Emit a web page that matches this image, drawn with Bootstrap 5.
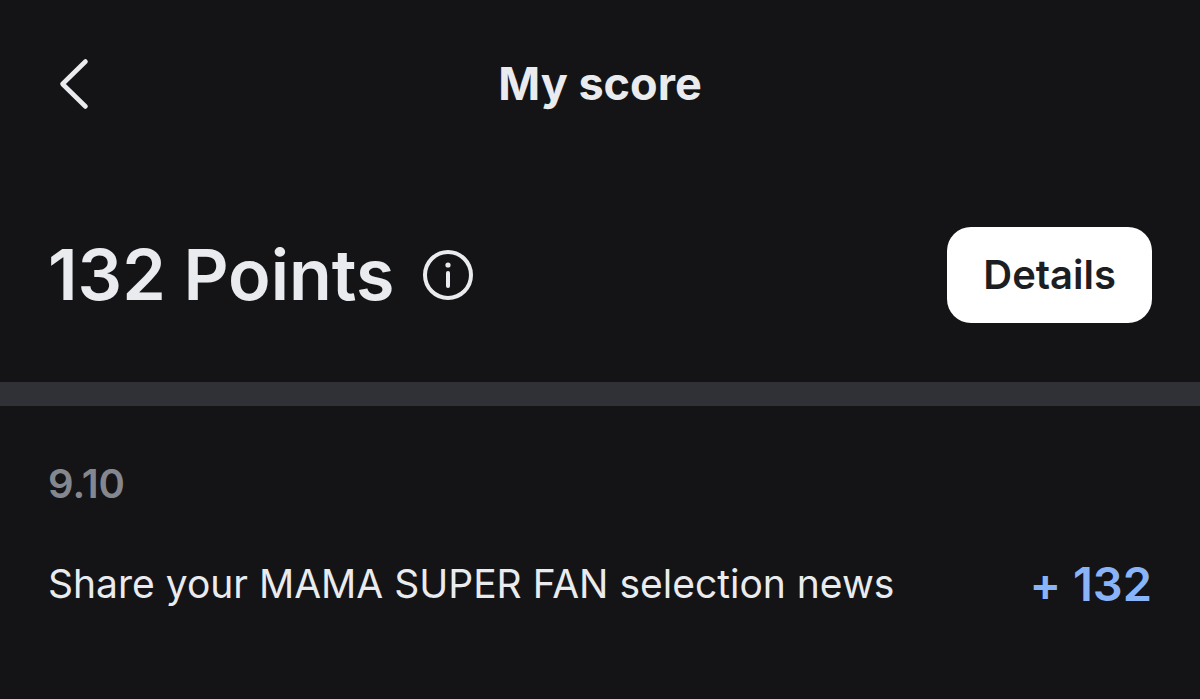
<!DOCTYPE html>
<html lang="en">
<head>
<meta charset="utf-8">
<meta name="viewport" content="width=device-width, initial-scale=1">
<title>My score</title>
<link href="https://cdn.jsdelivr.net/npm/bootstrap@5.3.0/dist/css/bootstrap.min.css" rel="stylesheet">
<style>
body { background: #141416; color: #e9ebee; font-family: Inter, "Liberation Sans", sans-serif; }
.side-pad { padding-left: 48px; padding-right: 48px; }
.topbar { display: grid; grid-template-columns: 1fr auto 1fr; min-height: 168px; }
.back-btn { padding: 8px; line-height: 0; color: inherit; background: none; border: 0; justify-self: start; }
.page-title { font-size: 45px; line-height: 56px; font-weight: 700; }
.summary { min-height: 214px; }
.summary-score { gap: 28px; }
.points { font-size: 70px; line-height: 84px; font-weight: 600; }
.info-btn { padding: 0; line-height: 0; color: inherit; background: none; border: 0; }
.details-btn { background: #fff; color: #1d1e21; border: 0; border-radius: 24px; padding: 22px 36px; font-size: 40px; line-height: 52px; font-weight: 600; }
.divider { height: 24px; background: #303136; }
.history { padding-top: 52px; padding-bottom: 48px; }
.date { font-size: 40px; line-height: 52px; font-weight: 600; color: #85878f; margin-bottom: 46px; }
.entry { font-size: 39px; line-height: 56px; }
.gain { font-size: 47px; line-height: 56px; font-weight: 600; color: #8ab4f8; font-variant-ligatures: no-contextual; }
</style>
</head>
<body>
<header class="topbar side-pad align-items-center">
<button class="back-btn" type="button" aria-label="Back">
<svg width="36" height="52" viewBox="0 0 36 52" fill="none" stroke="currentColor" stroke-width="4.6" stroke-linecap="round" stroke-linejoin="round"><path d="M29.500 3.500 6.500 26l23 22.500"/></svg>
</button>
<h1 class="page-title m-0">My score</h1>
</header>
<main>
<section class="summary side-pad d-flex align-items-center justify-content-between">
<div class="summary-score d-flex align-items-center">
<h2 class="points m-0">132 Points</h2>
<button class="info-btn" type="button" aria-label="About points">
<svg width="52" height="52" viewBox="0 0 52 52" fill="none" stroke="currentColor" stroke-width="4" stroke-linecap="round"><circle cx="26" cy="26" r="23"/><path d="M26 24v13"/><circle cx="26" cy="16" r="2.600" fill="currentColor" stroke="none"/></svg>
</button>
</div>
<button class="details-btn" type="button">Details</button>
</section>
<div class="divider"></div>
<section class="history side-pad">
<h3 class="date mt-0">9.10</h3>
<ul class="list-unstyled m-0">
<li class="d-flex align-items-center justify-content-between">
<span class="entry">Share your MAMA SUPER FAN selection news</span>
<span class="gain text-nowrap">+ 132</span>
</li>
</ul>
</section>
</main>
<script src="https://cdn.jsdelivr.net/npm/bootstrap@5.3.0/dist/js/bootstrap.bundle.min.js"></script>
</body>
</html>
